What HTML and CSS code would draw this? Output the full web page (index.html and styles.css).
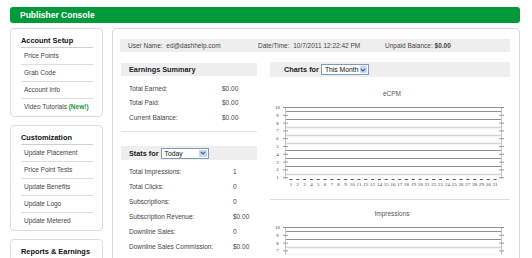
FILE: index.html
```html
<!DOCTYPE html>
<html lang="en">

<head>
    <meta charset="UTF-8">
    <meta name="viewport" content="width=device-width, initial-scale=1.0">
    <title>Publisher Console</title>
    <link rel="stylesheet" href="styles.css">
</head>

<body>

    <div class="topbar">Publisher Console</div>

    <div class="layout">
        <div class="sidebar">
            <div class="side-box">
                <div class="side-title">Account Setup</div>
                <a class="side-link">Price Points</a>
                <a class="side-link">Grab Code</a>
                <a class="side-link">Account Info</a>
                <a class="side-link">Video Tutorials <span class="new">(New!)</span></a>
            </div>
            <div class="side-box">
                <div class="side-title">Customization</div>
                <a class="side-link">Update Placement</a>
                <a class="side-link">Price Point Tests</a>
                <a class="side-link">Update Benefits</a>
                <a class="side-link">Update Logo</a>
                <a class="side-link">Update Metered</a>
            </div>
            <div class="side-box">
                <div class="side-title">Reports &amp; Earnings</div>
            </div>
        </div>

        <div class="main">
            <div class="info-bar">
                <span class="info-user">User Name:&nbsp; ed@dashhelp.com</span>
                <span class="info-date">Date/Time:&nbsp; 10/7/2011 12:22:42 PM</span>
                <span>Unpaid Balance: <b>$0.00</b></span>
            </div>

            <div class="columns">
                <div class="col-left">
                    <div class="panel-head earnings-head">Earnings Summary</div>
                    <table class="stats earnings">
                        <tr><td>Total Earned:</td><td>$0.00</td></tr>
                        <tr><td>Total Paid:</td><td>$0.00</td></tr>
                        <tr><td>Current Balance:</td><td>$0.00</td></tr>
                    </table>
                    <div class="divider"></div>
                    <div class="panel-head stats-head">
                        Stats for
                        <span class="select select-day">
                            <span class="select-value">Today</span>
                            <span class="select-arrow"><svg width="6" height="4" viewBox="0 0 6 4"><path d="M0.8 0.8 L3 3 L5.2 0.8" fill="none" stroke="#3b5a9a" stroke-width="1.1"/></svg></span>
                        </span>
                    </div>
                    <table class="stats counts">
                        <tr><td>Total Impressions:</td><td>1</td></tr>
                        <tr><td>Total Clicks:</td><td>0</td></tr>
                        <tr><td>Subscriptions:</td><td>0</td></tr>
                        <tr><td>Subscription Revenue:</td><td>$0.00</td></tr>
                        <tr><td>Downline Sales:</td><td>0</td></tr>
                        <tr><td>Downline Sales Commission:</td><td>$0.00</td></tr>
                    </table>
                </div>

                <div class="col-right">
                    <div class="panel-head charts-head">
                        Charts for
                        <span class="select select-month">
                            <span class="select-value">This Month</span>
                            <span class="select-arrow"><svg width="6" height="4" viewBox="0 0 6 4"><path d="M0.8 0.8 L3 3 L5.2 0.8" fill="none" stroke="#3b5a9a" stroke-width="1.1"/></svg></span>
                        </span>
                    </div>
                    <div class="chart">
                        <div class="chart-title">eCPM</div>
                        <svg class="chart-svg" width="240" height="90" viewBox="0 0 240 90"></svg>
                    </div>
                    <div class="chart chart-next">
                        <div class="chart-title">Impressions</div>
                        <!-- only the top of this one is on screen -->
                        <svg class="chart-svg" width="240" height="36" viewBox="0 0 240 36"></svg>
                    </div>
                </div>
            </div>
        </div>
    </div>

    <script>
        const charts = document.querySelectorAll(".chart-svg");

        // grid shading, top to bottom (some lines come out darker than others)
        const shades = ["#8f8f8f", "#8f8f8f", "#d4d4d4", "#d4d4d4", "#d4d4d4", "#8f8f8f", "#8f8f8f", "#8f8f8f", "#d4d4d4"];

        const buildChart = (svg) => {
            const top = 8, step = 7.8, left = 15, right = 231, bottom = 80;
            const h = Number(svg.getAttribute("height"));
            let out = "";

            out += `<line x1="${left}" x2="${right}" y1="${top + 0.5}" y2="${top + 0.5}" stroke="#8f8f8f"/>`;
            for (let k = 0; k < 9; k++) {
                let y = Math.round(top + 4.3 + k * step) + 0.5;
                let w = shades[k] == "#d4d4d4" ? 1.6 : 1;
                out += `<line x1="${left}" x2="${right}" y1="${y}" y2="${y}" stroke="${shades[k]}" stroke-width="${w}"/>`;
            }

            // side axes
            out += `<line x1="${left + 0.5}" x2="${left + 0.5}" y1="${top}" y2="${bottom}" stroke="#c4c4c4"/>`;
            out += `<line x1="${right + 0.5}" x2="${right + 0.5}" y1="${top}" y2="${bottom}" stroke="#c4c4c4"/>`;

            for (let v = 10; v >= 1; v--) {
                let y = top + (10 - v) * step;
                out += `<line x1="${left - 2}" x2="${left + 3}" y1="${y + 0.5}" y2="${y + 0.5}" stroke="#999"/>`;
                out += `<line x1="${right - 2}" x2="${right + 3}" y1="${y + 0.5}" y2="${y + 0.5}" stroke="#999"/>`;
                if (y + 3 < h) {
                    out += `<text x="7.5" y="${y + 2}" class="axis-label" text-anchor="middle">${v}</text>`;
                }
            }

            if (h > 88) {
                for (let d = 1; d <= 31; d++) {
                    let x = 21 + (d - 1) * 6.8;
                    out += `<line x1="${x - 1.5}" x2="${x + 1.5}" y1="${bottom + 0.5}" y2="${bottom + 0.5}" stroke="#555"/>`;
                    out += `<text x="${x}" y="87" class="axis-label" text-anchor="middle">${d}</text>`;
                }
            }

            svg.innerHTML = out;
        }

        charts.forEach((svg) => buildChart(svg));
    </script>
</body>

</html>
```

FILE: styles.css
```css
html,
body {
    overflow: hidden;
}

body {
    margin: 0;
    padding: 7px 12px 0 10px;
    font-family: "Liberation Sans", Arial, sans-serif;
    font-size: 6.5px;
    color: #444;
    background-color: #fff;
}

.topbar {
    height: 16px;
    line-height: 16px;
    padding-left: 10px;
    background-color: #009a3b;
    border-radius: 3px;
    color: #fff;
    font-weight: bold;
    font-size: 8.5px;
}

.layout {
    display: flex;
    align-items: flex-start;
    gap: 9px;
    margin-top: 5px;
}

/* left menu */
.sidebar {
    width: 93px;
    flex-shrink: 0;
    display: flex;
    flex-direction: column;
    gap: 8px;
}

.side-box {
    border: 1px solid #dcdcdc;
    border-radius: 4px;
    padding: 6px 9px 1px 10px;
}

.side-box:last-child {
    height: 40px;
}

.side-title {
    line-height: 12px;
    font-size: 7.4px;
    font-weight: bold;
    color: #111;
    border-bottom: 1px solid #cfcfcf;
}

.side-link {
    display: block;
    line-height: 16px;
    padding-left: 3px;
    color: #444;
    border-bottom: 1px solid #dedede;
}

.side-link:last-child {
    border-bottom: none;
}

.new {
    color: #1a9a2e;
    font-weight: bold;
}

/* main panel */
.main {
    flex: 1;
    height: 260px;
    border: 1px solid #dcdcdc;
    border-radius: 4px;
    padding: 10px 9px 0 7px;
}

.info-bar {
    display: flex;
    height: 13px;
    line-height: 13px;
    padding-left: 8px;
    background-color: #eee;
    white-space: nowrap;
}

.info-user {
    width: 130px;
}

.info-date {
    width: 127px;
}

.columns {
    display: flex;
    gap: 13px;
    margin-top: 10px;
}

.col-left {
    width: 136px;
    margin-left: 1px;
}

.col-right {
    width: 240px;
}

.panel-head {
    display: flex;
    align-items: center;
    gap: 2px;
    padding-left: 8px;
    background-color: #eee;
    font-size: 7.3px;
    font-weight: bold;
    color: #222;
    white-space: nowrap;
}

.earnings-head {
    height: 13px;
    margin-top: 1px;
}

.stats-head {
    height: 14px;
}

.charts-head {
    height: 15px;
    padding-left: 14px;
}

.stats {
    border-collapse: collapse;
    font-size: 6.5px;
    white-space: nowrap;
}

.stats td {
    padding: 0;
}

.earnings {
    margin-top: 5px;
}

.earnings td {
    height: 14.5px;
}

.earnings td:first-child {
    width: 93px;
    padding-left: 8px;
}

.counts {
    margin-top: 3.5px;
}

.counts td {
    height: 15px;
}

.counts td:first-child {
    width: 104px;
    padding-left: 8px;
}

.divider {
    margin-top: 6.5px;
    margin-bottom: 14px;
    border-top: 1px solid #e2e2e2;
}

/* fake dropdowns */
.select {
    display: inline-flex;
    flex-shrink: 0;
    box-sizing: border-box;
    width: 48px;
    height: 11px;
    border: 1px solid #7f9db9;
    background-color: #fff;
    font-weight: normal;
    font-size: 6.8px;
    color: #111;
    white-space: nowrap;
}

.select-value {
    flex: 1;
    padding-left: 3px;
    line-height: 9px;
}

.select-arrow {
    display: flex;
    align-items: center;
    justify-content: center;
    width: 8px;
    margin: 1px;
    background-color: #c6d6fb;
    border-radius: 1px;
}

/* charts */
.chart-title {
    margin-top: 12px;
    line-height: 10px;
    text-align: center;
    padding-left: 4px;
    color: #555;
}

.chart-svg {
    display: block;
}

.chart-next {
    margin-top: 10px;
    border-top: 1px solid #dedede;
}

.chart-next .chart-title {
    margin-top: 9px;
}

.axis-label {
    font-family: "Liberation Serif", serif;
    font-size: 5px;
    fill: #444;
}
```
